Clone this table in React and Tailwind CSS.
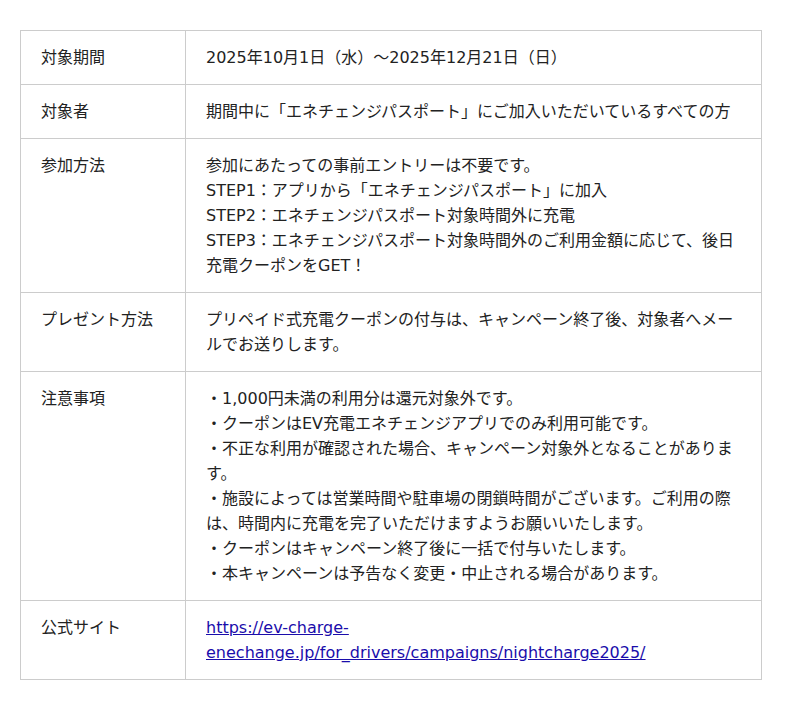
import React from "react";

const rows = [
    { label: "対象期間", body: ["2025年10月1日（水）〜2025年12月21日（日）"] },
    { label: "対象者", body: ["期間中に「エネチェンジパスポート」にご加入いただいているすべての方"] },
    {
        label: "参加方法",
        body: [
            "参加にあたっての事前エントリーは不要です。",
            "STEP1：アプリから「エネチェンジパスポート」に加入",
            "STEP2：エネチェンジパスポート対象時間外に充電",
            "STEP3：エネチェンジパスポート対象時間外のご利用金額に応じて、後日充電クーポンをGET！",
        ],
    },
    { label: "プレゼント方法", body: ["プリペイド式充電クーポンの付与は、キャンペーン終了後、対象者へメールでお送りします。"] },
    {
        label: "注意事項",
        body: [
            "・1,000円未満の利用分は還元対象外です。",
            "・クーポンはEV充電エネチェンジアプリでのみ利用可能です。",
            "・不正な利用が確認された場合、キャンペーン対象外となることがあります。",
            "・施設によっては営業時間や駐車場の閉鎖時間がございます。ご利用の際は、時間内に充電を完了いただけますようお願いいたします。",
            "・クーポンはキャンペーン終了後に一括で付与いたします。",
            "・本キャンペーンは予告なく変更・中止される場合があります。",
        ],
    },
];

const url = "https://ev-charge-enechange.jp/for_drivers/campaigns/nightcharge2025/";

export default function App() {
    return (
        <div className="min-h-[710px] bg-white pt-[30px] pl-[20px] text-[16px] leading-[25px] text-[#222]" style={{ fontFamily: '"DejaVu Sans", "Noto Sans CJK JP", sans-serif' }}>
            <div className="grid w-[742px] grid-cols-[165px_1fr] border-t border-l border-[#cccccc]">
                {rows.map((row) => (
                    <React.Fragment key={row.label}>
                        <div className="border-r border-b border-[#cccccc] px-[20px] py-[14px]">{row.label}</div>
                        <div className="border-r border-b border-[#cccccc] px-[20px] py-[14px]">
                            {row.body.map((line, i) => (
                                <p key={i}>{line}</p>
                            ))}
                        </div>
                    </React.Fragment>
                ))}
                {/* 公式サイト */}
                <div className="border-r border-b border-[#cccccc] px-[20px] py-[14px]">公式サイト</div>
                <div className="border-r border-b border-[#cccccc] px-[20px] py-[14px]">
                    <a href={url} className="text-[#1a0dab] underline">{url}</a>
                </div>
            </div>
        </div>
    );
}
